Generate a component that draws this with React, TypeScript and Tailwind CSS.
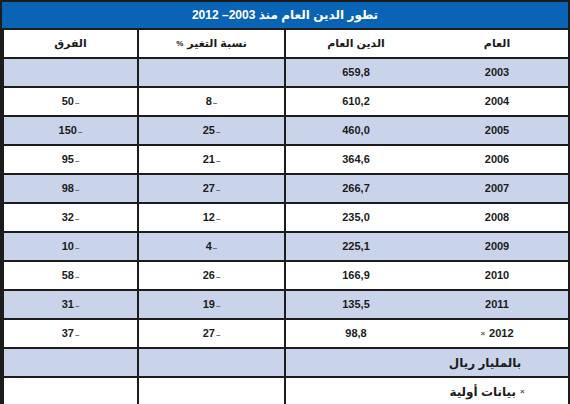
import React from "react";

interface Row {
  year: string;
  debt: string;
  pct: string;
  diff: string;
}

const rows: Row[] = [
  { year: "2003", debt: "659,8", pct: "", diff: "" },
  { year: "2004", debt: "610,2", pct: "8", diff: "50" },
  { year: "2005", debt: "460,0", pct: "25", diff: "150" },
  { year: "2006", debt: "364,6", pct: "21", diff: "95" },
  { year: "2007", debt: "266,7", pct: "27", diff: "98" },
  { year: "2008", debt: "235,0", pct: "12", diff: "32" },
  { year: "2009", debt: "225,1", pct: "4", diff: "10" },
  { year: "2010", debt: "166,9", pct: "26", diff: "58" },
  { year: "2011", debt: "135,5", pct: "19", diff: "31" },
  { year: "2012", debt: "98,8", pct: "27", diff: "37" },
];

const cell =
  "flex items-center justify-center h-[29px] border-t-2 border-[#1c1c1c]";

// negative value: number with a small trailing dash
const Neg: React.FC<{ v: string }> = ({ v }) =>
  v ? (
    <span dir="ltr" className="flex items-baseline">
      <span>{v}</span>
      <span className="text-[8px] text-[#555] ml-[1px]">–</span>
    </span>
  ) : null;

export default function App() {
  return (
    <div
      dir="rtl"
      className="w-[570px] h-[404px] overflow-hidden bg-white text-[#1c1c1c] font-bold"
      style={{ fontFamily: '"Liberation Sans", "DejaVu Sans", sans-serif' }}
    >
      <div className="border-x-2 border-t-2 border-[#1c1c1c]">
        <div className="h-[26px] bg-[#0a64b6] text-white text-[12px] flex items-center justify-center">
          تطور الدين العام منذ 2003– 2012
        </div>

        <div className="grid grid-cols-[142px_142px_147px_135px] text-[11px]">
          {/* header */}
          <div className={`${cell} bg-white`}>العام</div>
          <div className={`${cell} border-l-2 bg-white`}>الدين العام</div>
          <div className={`${cell} border-l-2 bg-white`}>
            نسبة التغير <span className="text-[8px] mr-1">%</span>
          </div>
          <div className={`${cell} border-l-2 bg-white`}>الفرق</div>

          {rows.map((r, i) => {
            const bg = i % 2 === 0 ? "bg-[#c9d4eb]" : "bg-white";
            return (
              <React.Fragment key={r.year}>
                <div className={`${cell} ${bg}`}>
                  {r.year}
                  {r.year === "2012" && (
                    <span className="text-[8px] text-[#555] mr-1">×</span>
                  )}
                </div>
                <div className={`${cell} border-l-2 ${bg}`}>{r.debt}</div>
                <div className={`${cell} border-l-2 ${bg}`}>
                  <Neg v={r.pct} />
                </div>
                <div className={`${cell} border-l-2 ${bg}`}>
                  <Neg v={r.diff} />
                </div>
              </React.Fragment>
            );
          })}

          {/* notes */}
          <div className={`${cell} bg-[#c9d4eb] text-[12px] pr-6`}>
            بالمليار ريال
          </div>
          <div className={`${cell} border-l-2 bg-[#c9d4eb]`} />
          <div className={`${cell} border-l-2 bg-[#c9d4eb]`} />
          <div className={`${cell} border-l-2 bg-[#c9d4eb]`} />

          <div className={`${cell} bg-white text-[12px] pr-5`}>
            <span className="text-[8px] text-[#555] ml-1">×</span>
            بيانات أولية
          </div>
          <div className={`${cell} border-l-2 bg-white`} />
          <div className={`${cell} border-l-2 bg-white`} />
          <div className={`${cell} border-l-2 bg-white`} />
        </div>
      </div>
    </div>
  );
}
